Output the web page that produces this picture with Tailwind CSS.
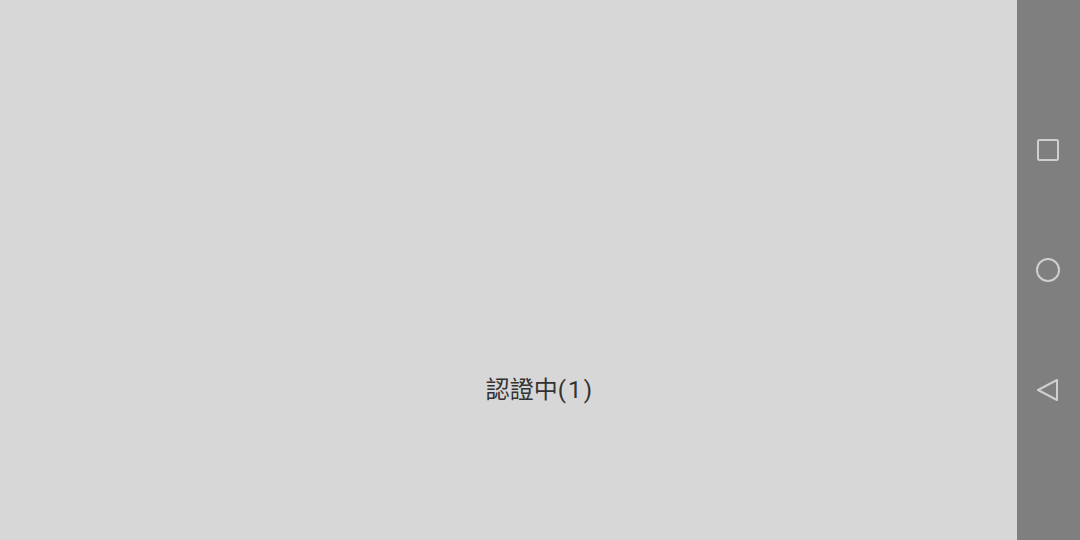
<!DOCTYPE html>
<html lang="zh-Hant">
<head>
  <meta charset="UTF-8" />
  <title>認證中</title>
  <script src="https://cdn.jsdelivr.net/npm/@tailwindcss/browser@4"></script>
</head>
<body class="bg-[#d7d7d7]">
  <div class="relative flex w-[1080px] h-[540px] overflow-hidden">
    <main class="flex-1 bg-[#d7d7d7]"></main>
    <nav class="w-[63px] bg-[#7f7f7f] flex flex-col items-center justify-center gap-[96px] pr-[2px] text-[#cfcfcf]">
      <svg class="w-6 h-6" viewBox="0 0 24 24" fill="none" stroke="currentColor" stroke-width="2"><rect x="2" y="2" width="20" height="20" rx="1.5" /></svg>
      <svg class="w-6 h-6" viewBox="0 0 24 24" fill="none" stroke="currentColor" stroke-width="2"><circle cx="12" cy="12" r="11" /></svg>
      <svg class="w-6 h-6" viewBox="0 0 24 24" fill="none" stroke="currentColor" stroke-width="2" stroke-linejoin="round"><path d="M21 2 L2 12 L21 22 Z" /></svg>
    </nav>
    <!-- toast sits over the page, centred on the whole window -->
    <p class="absolute left-0 right-0 top-[374px] text-center text-[24px] leading-[32px] text-[#333333] font-['Roboto','Noto_Sans_CJK_TC',sans-serif]">認證中<span class="tracking-[2.2px]">(1)</span></p>
  </div>
</body>
</html>
